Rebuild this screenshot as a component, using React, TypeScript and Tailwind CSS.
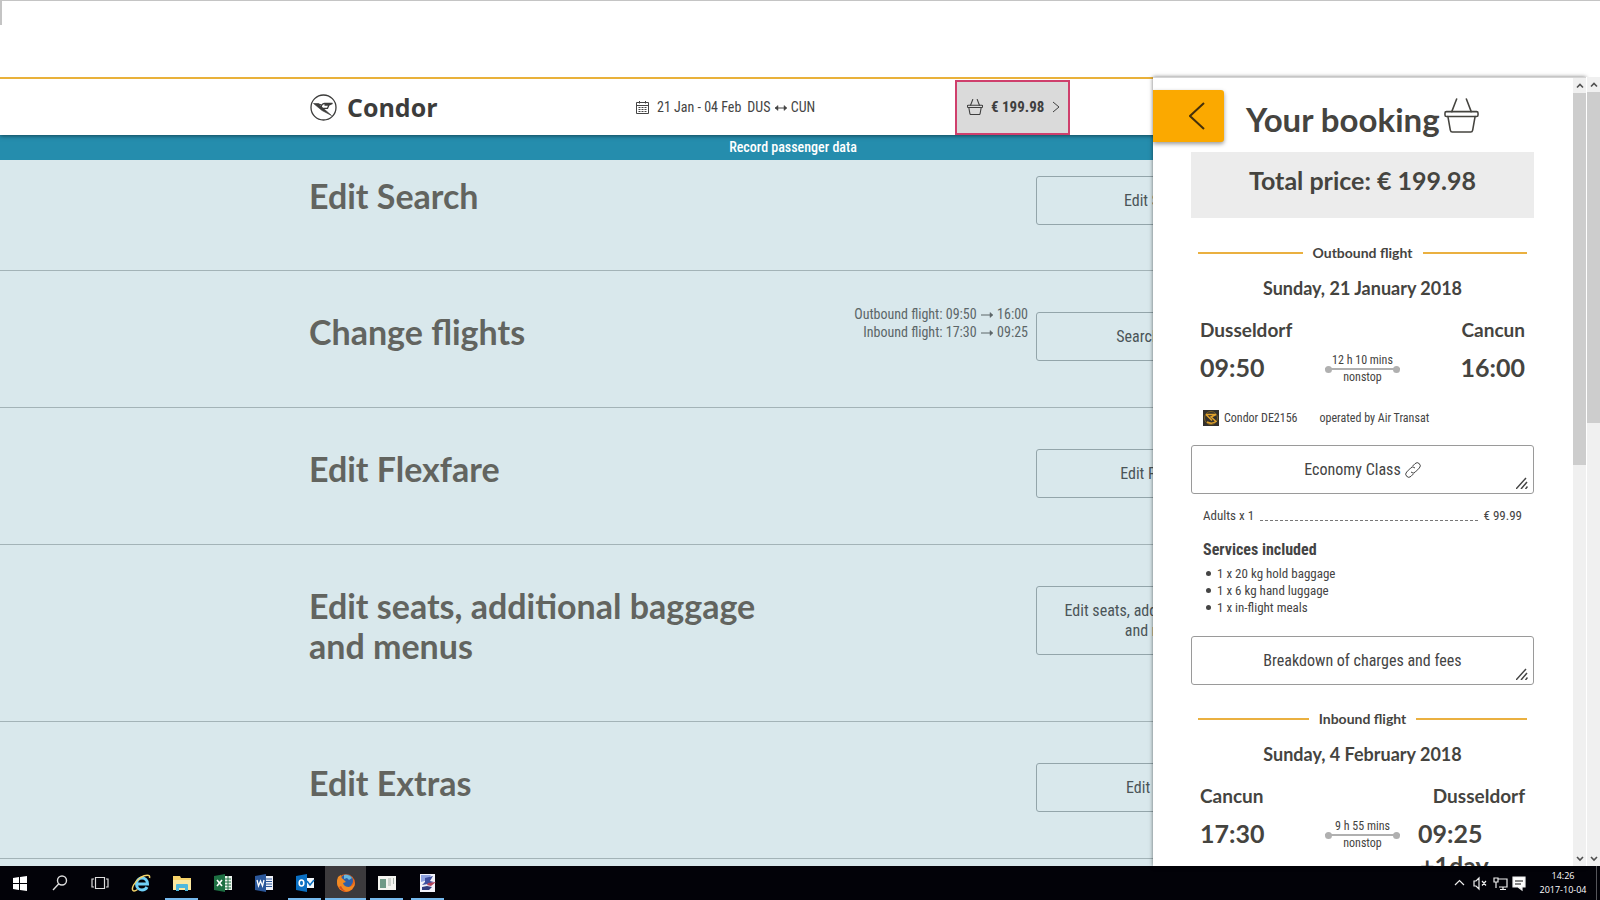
import React, { useState } from "react";

interface StepProps {
  title: React.ReactNode;
  action: React.ReactNode;
  info?: React.ReactNode;
  first?: boolean;
  tall?: boolean;
}

interface LegProps {
  label: string;
  date: string;
  from: string;
  to: string;
  departure: string;
  arrival: string;
  duration: string;
  nextDay?: boolean;
}

const services = ["1 x 20 kg hold baggage", "1 x 6 kg hand luggage", "1 x in-flight meals"];

const Basket = ({ className }: { className: string }) => (
  <svg className={className} viewBox="0 0 36 36" fill="none" stroke="currentColor" strokeLinejoin="round" strokeLinecap="round" aria-hidden="true">
    <path d="M13 1L8 14M23 1l5 13" />
    <rect x="1" y="14" width="34" height="5" rx="1.5" />
    <path d="M4 19l2.500 14q.4 2 2 2h19q1.600 0 2-2l2.500-14" />
  </svg>
);

const Arrow = ({ both }: { both?: boolean }) => (
  <svg className="inline-block h-2 w-3.5 align-middle" viewBox="0 0 14 8" fill="none" stroke="currentColor" aria-hidden="true">
    <path d="M1 4h11" />
    <path d="M10 1.500L13 4l-3 2.500z" fill="currentColor" strokeWidth="0.5" />
    {both && <path d="M4 1.500L1 4l3 2.500z" fill="currentColor" strokeWidth="0.5" />}
  </svg>
);

const ScrollBar = ({ thumb, className }: { thumb: string; className: string }) => (
  <div className={"relative z-20 flex shrink-0 flex-col items-center bg-[#f0f0f0] text-[#505050] " + className}>
    <svg className="h-[15px] w-3 shrink-0" viewBox="0 0 12 15" fill="none" stroke="currentColor" strokeWidth="1.6">
      <path d="M3 9.500l3-3 3 3" />
    </svg>
    <div className={"w-full bg-[#cdcdcd] " + thumb}></div>
    <svg className="mt-auto h-[15px] w-3 shrink-0" viewBox="0 0 12 15" fill="none" stroke="currentColor" strokeWidth="1.6">
      <path d="M3 6l3 3 3-3" />
    </svg>
  </div>
);

const Step: React.FC<StepProps> = ({ title, action, info, first, tall }) => {
  return (
    <section className={"border-b border-[#a3b3b7] " + (first ? "pt-4 pb-[45px]" : "pt-[41px] pb-[46px]")}>
      <div className="mx-auto flex max-w-[980px] items-start pl-1.5">
        <h2 className="mb-[9px] flex-1 font-[Lato,sans-serif] text-[34px] leading-10 font-bold text-[#62645f]">{title}</h2>
        {info && <div className="mr-2 -mt-[7px] text-right text-[14px] leading-[18px] text-[#5c6668]">{info}</div>}
        <button
          type="button"
          className={"w-[247px] shrink-0 rounded-[3px] border border-[#93a5aa] text-[16px] leading-5 text-[#4b5558] " + (tall ? "h-[69px]" : "h-[49px]")}
        >
          {action}
        </button>
      </div>
    </section>
  );
};

const PanelButton = ({ children }: { children: React.ReactNode }) => (
  <button type="button" className="relative flex h-[49px] w-full items-center justify-center gap-1 rounded-[3px] border border-[#9a9a9a] bg-white text-[16px] text-[#444]">
    {children}
    <svg className="absolute right-[5px] bottom-1 h-3 w-3" viewBox="0 0 12 12" stroke="#444" strokeWidth="1.5" aria-hidden="true">
      <path d="M0 12L10 1M5 12l6-7M9.500 12l2-2.500" />
    </svg>
  </button>
);

const Leg: React.FC<LegProps> = ({ label, date, from, to, departure, arrival, duration, nextDay }) => {
  return (
    <div className="px-[9px] font-[Lato,sans-serif] font-bold text-[#45443f]">
      <div className="-mx-0.5 flex items-center">
        <div className="h-0.5 flex-1 bg-[#eab040]"></div>
        <h3 className="px-2.5 text-[14px] leading-5">{label}</h3>
        <div className="h-0.5 flex-1 bg-[#eab040]"></div>
      </div>
      <p className="mt-[11px] text-center text-[18px] leading-7">{date}</p>
      <div className="mt-4 flex justify-between text-[19px] leading-6">
        <span>{from}</span>
        <span>{to}</span>
      </div>
      <div className="mt-[9px] grid grid-cols-[1fr_75px_1fr] text-[25px] leading-8">
        <span>{departure}</span>
        <div className="flex flex-col items-center pt-px font-['Liberation_Sans_Narrow','Roboto_Condensed',sans-serif] text-[12px] leading-4 font-normal">
          <span>{duration}</span>
          <div className="flex h-0.5 w-full items-center justify-between bg-[#b0b0b0]">
            <i className="h-[7px] w-[7px] rounded-full bg-[#b0b0b0]"></i>
            <i className="h-[7px] w-[7px] rounded-full bg-[#b0b0b0]"></i>
          </div>
          <span className="leading-[14px]">nonstop</span>
        </div>
        {nextDay ? (
          <div className="pl-[18px]">
            <div>{arrival}</div>
            <div className="pl-0.5">+1day</div>
          </div>
        ) : (
          <span className="text-right">{arrival}</span>
        )}
      </div>
    </div>
  );
};

const Panel = ({ onClose }: { onClose: () => void }) => (
  <aside className="absolute inset-y-0 right-[14px] z-10 flex w-[433px] border-t border-[#d4d4d4] bg-white shadow-[0_0_4px_rgba(0,0,0,0.55)]">
    <div className="min-w-0 flex-1 overflow-hidden">
      <div className="flex h-[74px] items-start pt-3">
        <button type="button" aria-label="Close booking" onClick={onClose} className="flex h-[52px] w-[71px] items-center justify-center rounded-r-[3px] bg-[#fba900] pl-4 shadow-[0_2px_4px_rgba(0,0,0,0.4)]">
          <svg className="h-7 w-4" viewBox="0 0 16 28" fill="none" stroke="#45300a" strokeWidth="2">
            <path d="M15 1L1 14l14 13" />
          </svg>
        </button>
        <h1 className="ml-[22px] flex items-center gap-1 pt-[7px] font-[Lato,sans-serif] text-[33px] leading-[44px] font-bold text-[#45443f]">
          Your booking
          <Basket className="-mt-2 h-[35px] w-[35px] stroke-[1.6]" />
        </h1>
      </div>
      <div className="pr-[39px] pl-[38px]">
        <p className="h-[66px] bg-[#ececec] pt-2.5 text-center font-[Lato,sans-serif] text-[25px] leading-9 font-bold text-[#45443f]">
          Total price: € 199.98
        </p>
        <div className="h-[25px]"></div>
        <Leg label="Outbound flight" date="Sunday, 21 January 2018" from="Dusseldorf" to="Cancun" departure="09:50" arrival="16:00" duration="12 h 10 mins" />
        <div className="mt-6 mb-[17px] flex items-center pl-3 text-[12px] leading-5 text-[#444]">
          <svg className="mr-[5px] h-4 w-4" viewBox="0 0 16 16" aria-hidden="true">
            <rect width="16" height="16" fill="#33302c" />
            <circle cx="8" cy="8" r="6.500" fill="none" stroke="#7d6223" />
            <path d="M3 4.500h10L8 7l5 4.500q-4 3-9 .5M3 4.500l6 6" fill="none" stroke="#e0a12c" strokeWidth="1.500" />
          </svg>
          <span>Condor DE2156</span>
          <span className="ml-[22px]">operated by Air Transat</span>
        </div>
        <PanelButton>
          Economy Class
          <svg className="h-4 w-4" viewBox="0 0 24 24" fill="none" stroke="currentColor" strokeWidth="1.500" aria-hidden="true">
            <path d="M9 15a4.500 4.500 0 0 0 6.500 0l6-6a4.500 4.500 0 0 0-6.500-6.500l-4 4" />
            <path d="M15 9a4.500 4.500 0 0 0-6.500 0l-6 6a4.500 4.500 0 0 0 6.500 6.500l4-4" />
          </svg>
        </PanelButton>
        <div className="mt-3 px-3 text-[#444]">
          <div className="flex items-center text-[13px] leading-5">
            <span>Adults x 1</span>
            <span className="mx-1.5 mt-2 flex-1 border-b border-dashed border-[#777]"></span>
            <span>€ 99.99</span>
          </div>
          <h4 className="mt-3.5 text-[16px] leading-5 font-bold">Services included</h4>
          <ul className="mt-[5px] mb-5 pl-[3px] text-[13px] leading-[17px]">
            {services.map((service) => (
              <li key={service} className="flex items-center gap-1.5">
                <i className="h-[5px] w-[5px] rounded-full bg-[#444]"></i>
                {service}
              </li>
            ))}
          </ul>
        </div>
        <PanelButton>Breakdown of charges and fees</PanelButton>
        <div className="h-6"></div>
        <Leg label="Inbound flight" date="Sunday, 4 February 2018" from="Cancun" to="Dusseldorf" departure="17:30" arrival="09:25" duration="9 h 55 mins" nextDay />
      </div>
    </div>
    <ScrollBar className="w-[13px]" thumb="h-[372px]" />
  </aside>
);

const Task = ({ label, state, narrow, children }: { label: string; state?: "open" | "active"; narrow?: boolean; children: React.ReactNode }) => (
  <button
    type="button"
    aria-label={label}
    className={"flex h-full shrink-0 flex-col items-center " + (narrow ? "w-10 " : "w-[41px] ") + (state === "active" ? "bg-[#3c3a3d]" : "")}
  >
    <svg className="mt-[7px] h-5 w-5" viewBox="0 0 20 20">{children}</svg>
    {state && <span className={"mt-auto h-0.5 bg-[#76b9ed] " + (state === "active" ? "w-full" : "w-[33px]")}></span>}
  </button>
);

const TaskBar = () => (
  <footer className="flex h-[34px] shrink-0 items-center bg-[#020208] text-white">
    <Task narrow label="Start">
      <path fill="#fff" d="M3 5l6-1v6H3zM10 3.900L17 3v7h-7zM3 11h6v6l-6-1zM10 11h7v7l-7-1z" />
    </Task>
    <Task narrow label="Search">
      <g fill="none" stroke="#ddd" strokeWidth="1.400">
        <circle cx="12" cy="7.500" r="4.500" />
        <path d="M8.800 10.700L3 17" />
      </g>
    </Task>
    <Task narrow label="Task view">
      <path fill="none" stroke="#ddd" strokeWidth="1.200" d="M5.500 4.500h9v11h-9zM4 6H2v8h2M16 6h2v8h-2" />
    </Task>
    <Task label="Internet Explorer">
      <path fill="none" stroke="#6fd0f7" strokeWidth="3" d="M5.500 11h11c0-4-2.500-6-5.500-6s-5.500 2.500-5.500 6 2.500 6 5.500 6c2.200 0 4-1 5-3" />
      <path fill="none" stroke="#f3d36b" strokeWidth="1.500" d="M18.500 5c1-4-4-3.500-9-.5-6 4-9.500 11-7.500 13 1 1 3 0 4.500-1" />
    </Task>
    <Task label="File Explorer" state="open">
      <path fill="#f7d36a" d="M1 3h7l1 2h10v12H1z" />
      <path fill="#fbe8a0" d="M1 7h18v10H1z" />
      <path fill="#4fb8dc" d="M4 18v-6q0-1 1-1h10q1 0 1 1v6h-3v-3H7v3z" />
    </Task>
    <Task label="Excel">
      <path fill="#eef5ef" d="M10 3h9v14h-9z" />
      <path stroke="#237346" d="M11 6h7M11 9h7M11 12h7M11 15h7M15 3v14" />
      <path fill="#1d6f42" d="M1 3l11-2v18L1 17z" />
      <path stroke="#fff" strokeWidth="1.600" d="M4 7l5 6M9 7l-5 6" />
    </Task>
    <Task label="Word">
      <path fill="#eef1f8" d="M10 3h9v14h-9z" />
      <path stroke="#2b579a" d="M12 6h6M12 8.500h6M12 11h6M12 13.500h6" />
      <path fill="#2b579a" d="M1 3l11-2v18L1 17z" />
      <path fill="none" stroke="#fff" strokeWidth="1.300" d="M3 7l1.500 6L6.500 8l2 5L10 7" />
    </Task>
    <Task label="Outlook" state="open">
      <path fill="#f3f8fc" d="M10 5h9v10h-9z" />
      <path fill="none" stroke="#0a6fc2" strokeWidth="1.500" d="M12 8l3 4 4-5" />
      <path fill="#0a6fc2" d="M1 3l11-2v18L1 17z" />
      <ellipse cx="6.500" cy="10" rx="2.300" ry="3" fill="none" stroke="#fff" strokeWidth="1.600" />
    </Task>
    <Task label="Firefox" state="active">
      <circle cx="10" cy="10" r="9" fill="#e8661b" />
      <circle cx="10.500" cy="8" r="6.500" fill="#2d5fa8" />
      <path fill="#67b7dd" d="M8 2q5-1 8 3l-3 2-2-2-3 1z" />
      <path fill="#f08a24" d="M2 4q-3 8 3 13 6 4 11-1 3-3 3-7-2 5-6 5-5 0-6-4l3-1-3-3q-2-1-2-4-2 1-3 2z" />
      <path fill="#d64a1c" d="M3 14q4 6 11 4-6 2-9-5z" />
    </Task>
    <Task label="Publisher" state="open">
      <path fill="#f4f4f0" d="M1 3h18v14H1z" />
      <path fill="#6f9a87" d="M3 6h6v9H3z" />
      <path stroke="#aab5ae" d="M11 6h3M11 8h3M11 10h3M11 12h3M16.500 5v6" />
    </Task>
    <Task label="Paint" state="open">
      <path fill="#f2f2fa" d="M2 1h15v18H2z" />
      <path fill="#8fa3e0" d="M3 2h10l-3 5-7 2z" />
      <path fill="#3f4f9f" d="M7 5l8-2-3 5 4 1-6 2-6 1 3-3z" />
      <path fill="#b2455b" d="M10 10l8-1-5 4-4-1z" />
      <path fill="#313b7d" d="M4 14l5-1 5 1-3 3H4z" />
    </Task>
    <div className="ml-auto flex items-center">
      <svg className="h-5 w-[72px]" viewBox="0 0 72 20" fill="none" stroke="#eee" strokeWidth="1.200" aria-hidden="true">
        <path d="M1 12l4.500-4.500L10 12" />
        <path d="M20 8h2l3-3v11l-3-3h-2zM28 8l4 4.500M32 8l-4 4.500" />
        <path d="M44 6h9v8h-8M49 14v2M46 16.500h6M40 5h4v4h-4zM42 9v6" />
        <path d="M59 4h12v10h-3v3l-4-3h-5z" fill="#fff" />
        <path d="M61 8h8M61 11h6" stroke="#111" />
      </svg>
      <div className="ml-3 w-[50px] text-center font-['Open_Sans',sans-serif] text-[9px] leading-[14px]">
        <div>14:26</div>
        <div>2017-10-04</div>
      </div>
      <span className="ml-2 mr-[3px] h-[34px] w-px bg-[#55555a]"></span>
    </div>
  </footer>
);

const App: React.FC = () => {
  const [open, setOpen] = useState(true);

  return (
    <div className="flex h-screen flex-col overflow-hidden bg-white font-['Liberation_Sans_Narrow','Roboto_Condensed',sans-serif]">
      <div className="h-[77px] shrink-0 border-t border-[#c4c4c4]">
        <div className="h-6 w-0.5 bg-[#c4c4c4]"></div>
      </div>
      <div className="relative flex min-h-0 flex-1">
        <div className="flex min-w-0 flex-1 flex-col overflow-hidden bg-[#d9e8ec]">
          <header className="z-[1] border-t-2 border-[#e9b13a] bg-white shadow-[0_1px_4px_rgba(0,0,0,0.5)]">
            <div className="mx-auto flex h-14 max-w-[980px] items-center pl-[7px]">
              <a href="#home" className="flex w-[326px] shrink-0 items-center gap-2.5 text-[#3c3c3b]">
                <svg className="h-[27px] w-[27px]" viewBox="0 0 27 27" fill="none" stroke="currentColor" aria-hidden="true">
                  <circle cx="13.500" cy="13.500" r="12.500" strokeWidth="1.300" />
                  <path d="M3.500 9.500h4.500l5.500 5 8 7-9.500-5z" fill="currentColor" strokeWidth="0.600" />
                  <path d="M8 9.800l3.500 1.200M11 13.500l.8-2.500q1.200-1.700 3-1.500h7.700l-3.700 1.500h-4.300M19 11l-1.500 3.300h-5" strokeWidth="1.300" />
                </svg>
                <span className="font-['Open_Sans',sans-serif] text-[25px] leading-8 font-bold">Condor</span>
              </a>
              <div className="flex w-[319px] shrink-0 items-center text-[14px] text-[#444]">
                <svg className="mr-2 h-[13px] w-[13px]" viewBox="0 0 13 13" fill="none" stroke="currentColor" aria-hidden="true">
                  <path d="M.5 1.500h12v11H.5zM.5 4.500h12M3.500 0v2.500M9.500 0v2.500" />
                  <path d="M2.500 6.500h8M2.500 8.500h8M2.500 10.500h8" strokeDasharray="2 1" />
                </svg>
                <span>21 Jan - 04 Feb</span>
                <span className="ml-1.5">DUS <Arrow both /> CUN</span>
              </div>
              <button
                type="button"
                onClick={() => setOpen(true)}
                className="flex h-[55px] w-[115px] shrink-0 items-center gap-2 border-2 border-[#cf3f6c] bg-[#dadada] px-2.5 text-[15px] text-[#3f3f3f]"
              >
                <Basket className="h-4 w-4 shrink-0 stroke-[2.4]" />
                <span className="flex-1 font-bold whitespace-nowrap">€ 199.98</span>
                <svg className="h-3 w-2 shrink-0" viewBox="0 0 8 12" fill="none" stroke="currentColor">
                  <path d="M1 1l6 5-6 5" />
                </svg>
              </button>
            </div>
          </header>
          <div className="h-[25px] shrink-0 bg-[#258dad] text-center text-[14px] leading-[25px] font-medium text-white">Record passenger data</div>
          <main>
            <Step first title="Edit Search" action="Edit Search" />
            <Step
              title="Change flights"
              action="Search flights"
              info={
                <>
                  <p>Outbound flight: 09:50 <Arrow /> 16:00</p>
                  <p>Inbound flight: 17:30 <Arrow /> 09:25</p>
                </>
              }
            />
            <Step title="Edit Flexfare" action="Edit Flexfare" />
            <Step tall title={<>Edit seats, additional baggage<br />and menus</>} action={<>Edit seats, additional baggage<br />and menus</>} />
            <Step title="Edit Extras" action="Edit Extras" />
          </main>
        </div>
        {open && <Panel onClose={() => setOpen(false)} />}
        <ScrollBar className="w-[14px] border-l border-white" thumb="h-[331px]" />
      </div>
      <TaskBar />
    </div>
  );
};

export default App;
